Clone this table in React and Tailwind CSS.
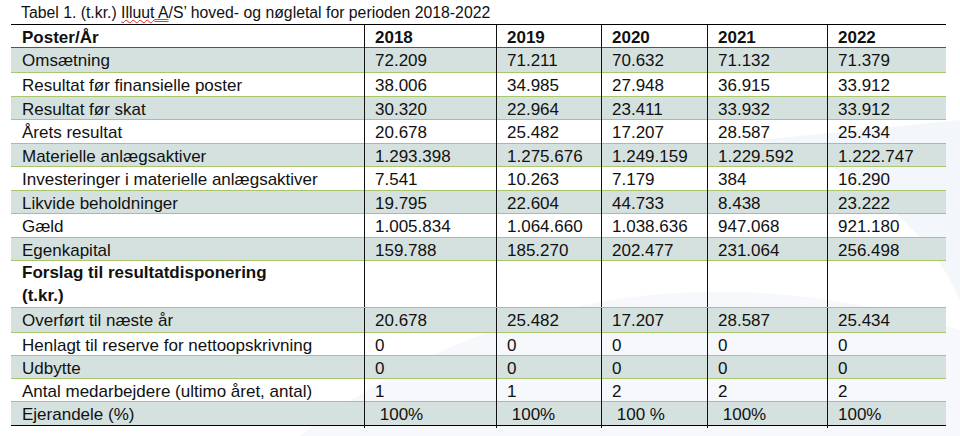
import React from "react";

const rows = [
  { label: "Omsætning", v: ["72.209", "71.211", "70.632", "71.132", "71.379"], shade: true, h: "h-[25px]" },
  { label: "Resultat før finansielle poster", v: ["38.006", "34.985", "27.948", "36.915", "33.912"] },
  { label: "Resultat før skat", v: ["30.320", "22.964", "23.411", "33.932", "33.912"], shade: true },
  { label: "Årets resultat", v: ["20.678", "25.482", "17.207", "28.587", "25.434"] },
  { label: "Materielle anlægsaktiver", v: ["1.293.398", "1.275.676", "1.249.159", "1.229.592", "1.222.747"], shade: true },
  { label: "Investeringer i materielle anlægsaktiver", v: ["7.541", "10.263", "7.179", "384", "16.290"] },
  { label: "Likvide beholdninger", v: ["19.795", "22.604", "44.733", "8.438", "23.222"], shade: true },
  { label: "Gæld", v: ["1.005.834", "1.064.660", "1.038.636", "947.068", "921.180"] },
  { label: "Egenkapital", v: ["159.788", "185.270", "202.477", "231.064", "256.498"], shade: true },
  { label: "forslag", v: ["", "", "", "", ""], h: "h-[47px]" },
  { label: "Overført til næste år", v: ["20.678", "25.482", "17.207", "28.587", "25.434"], shade: true, h: "h-[24.5px]" },
  { label: "Henlagt til reserve for nettoopskrivning", v: ["0", "0", "0", "0", "0"], h: "h-[23px]" },
  { label: "Udbytte", v: ["0", "0", "0", "0", "0"], shade: true },
  { label: "Antal medarbejdere (ultimo året, antal)", v: ["1", "1", "2", "2", "2"], h: "h-[23px]" },
  { label: "Ejerandele (%)", v: [" 100%", " 100%", " 100 %", " 100%", "100%"], shade: true, last: true },
];

const cols = "grid grid-cols-[353px_132px_105px_106px_120px_119px]";

function Row({ row }) {
  const border = row.last ? "border-b border-black" : "border-b border-[#a9c66f]";
  return (
    <div className={`${cols} ${row.h ?? "h-[23.5px]"} ${border} ${row.shade ? "bg-[#d5e1df]" : ""}`}>
      {row.label === "forslag" ? (
        <div className="pl-[11px] font-bold leading-[23px]">
          Forslag til resultatdisponering
          <br />
          (t.kr.)
        </div>
      ) : (
        <div className="pl-[11px] flex items-center whitespace-pre">{row.label}</div>
      )}
      {row.v.map((x, i) => (
        <div key={i} className="border-l border-[#111] pl-[10px] flex items-center whitespace-pre">
          {x}
        </div>
      ))}
    </div>
  );
}

export default function App() {
  return (
    <div
      className="relative w-[960px] h-[436px] overflow-hidden bg-white text-[#111]"
      style={{ fontFamily: '"Liberation Sans", Arial, sans-serif' }}
    >
      <svg className="absolute inset-0" width="960" height="436" viewBox="0 0 960 436">
        <path d="M300 436 C 480 300, 700 250, 960 330 L960 436 Z" fill="#f6f8fb" />
        <path d="M760 140 C 850 160, 930 230, 960 300 L960 120 Z" fill="#f3f6fa" />
      </svg>
      <div className="relative">
        <div className="h-[24px] pl-[21px] pt-[4px] text-[15.8px] leading-[18px] whitespace-nowrap">
          Tabel 1. (t.kr.){" "}
          <span className="underline decoration-wavy decoration-[#e0242a] decoration-1">Illuut</span>
          <span className="underline decoration-double decoration-[#3d6fd6] decoration-1"> A</span>
          /S’ hoved- og nøgletal for perioden 2018-2022
        </div>
        <div className="ml-[11px] w-[935px] text-[17px] border-t border-black">
          <div className={`${cols} h-[23px] border-b border-[#555] font-bold`}>
            <div className="pl-[11px] flex items-center">Poster/År</div>
            {["2018", "2019", "2020", "2021", "2022"].map((y) => (
              <div key={y} className="border-l border-[#111] pl-[10px] flex items-center">
                {y}
              </div>
            ))}
          </div>
          {rows.map((r) => (
            <Row key={r.label} row={r} />
          ))}
        </div>
      </div>
    </div>
  );
}
